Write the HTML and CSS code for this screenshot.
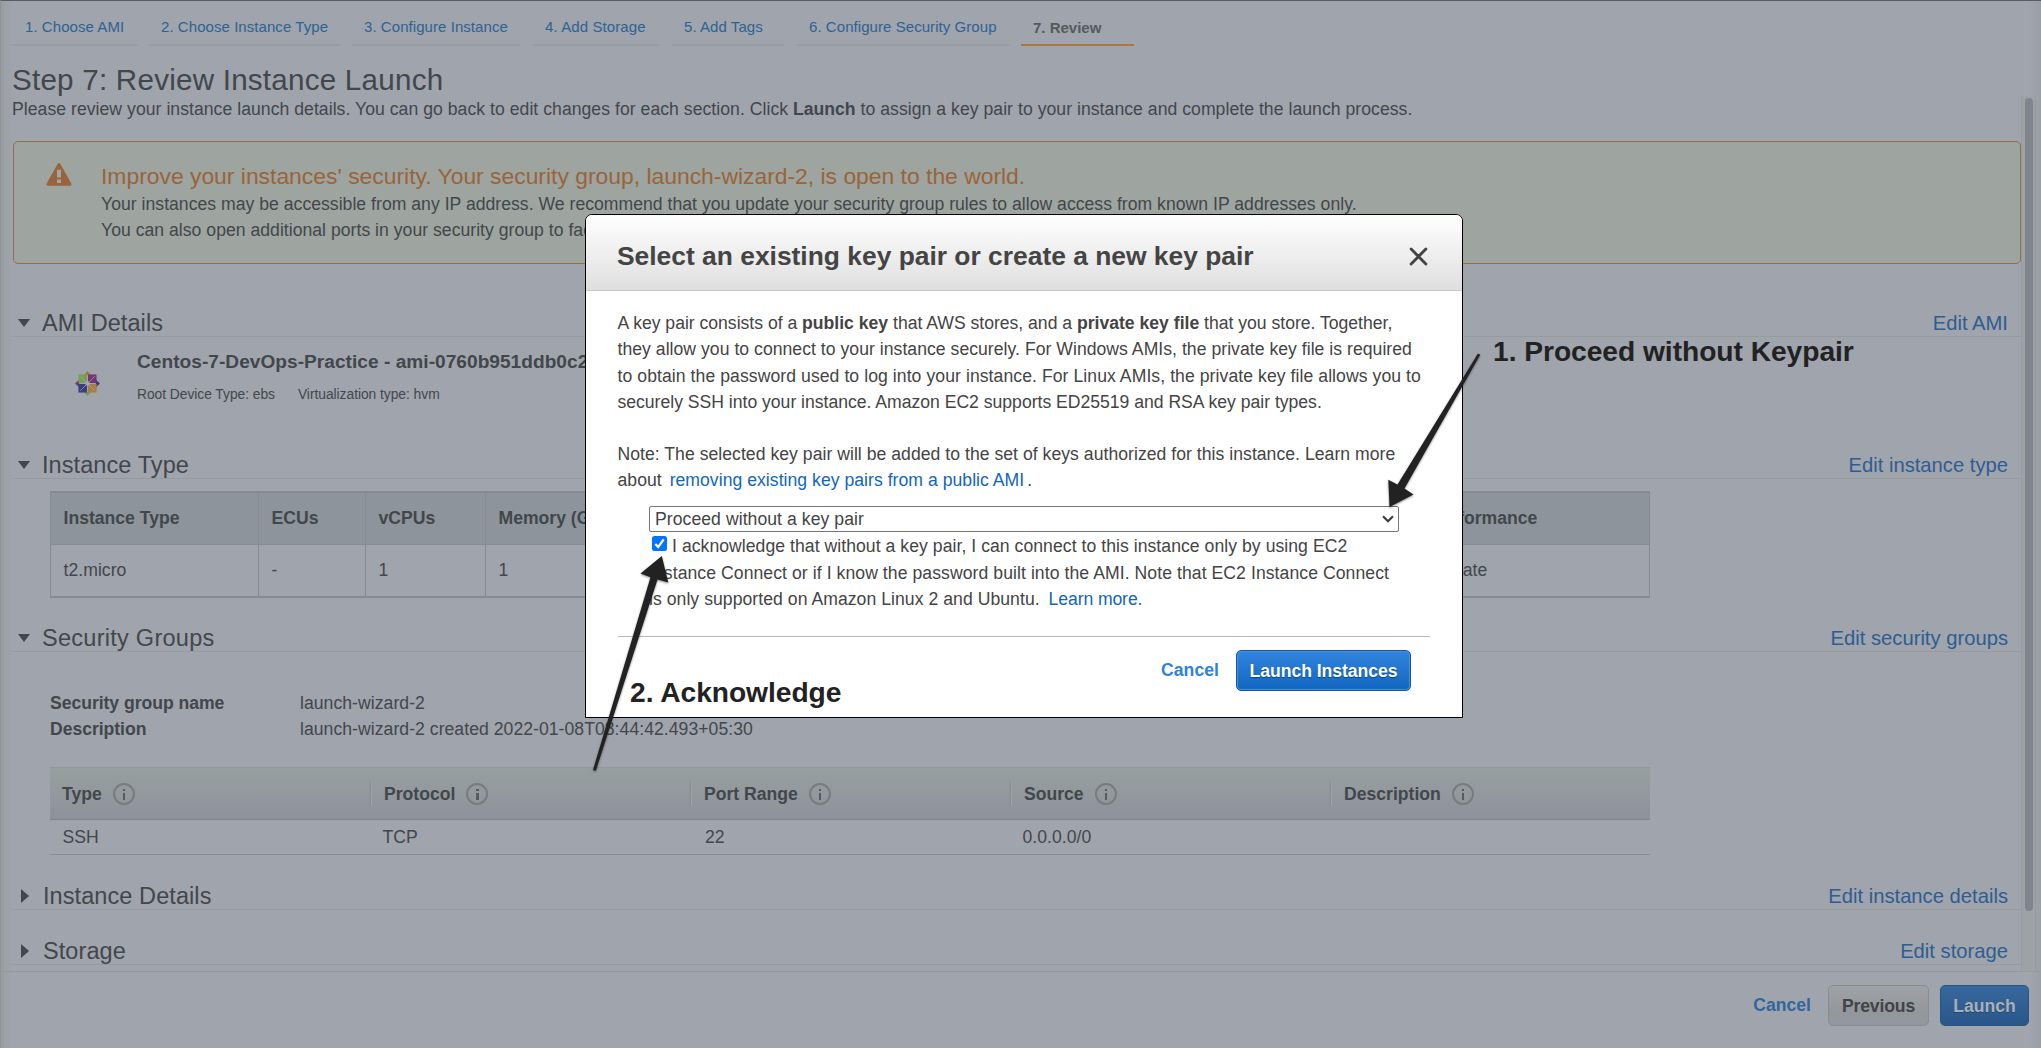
FILE: index.html
```
<!DOCTYPE html>
<html lang="en">
<head>
<meta charset="utf-8">
<title>Review Instance Launch</title>
<link rel="stylesheet" href="styles.css">
</head>
<body>
<div class="page">
  <nav class="tabs">
    <a class="tab tab-ami">1. Choose AMI</a>
    <a class="tab tab-type">2. Choose Instance Type</a>
    <a class="tab tab-configure">3. Configure Instance</a>
    <a class="tab tab-storage">4. Add Storage</a>
    <a class="tab tab-tags">5. Add Tags</a>
    <a class="tab tab-security">6. Configure Security Group</a>
    <a class="tab tab-review current">7. Review</a>
  </nav>
  <h1>Step 7: Review Instance Launch</h1>
  <div class="scroller">
    <main class="content">
      <p class="intro">Please review your instance launch details. You can go back to edit changes for each section. Click <b>Launch</b> to assign a key pair to your instance and complete the launch process.</p>
      <div class="alert">
        <svg class="alert-icon" viewBox="0 0 26 23"><path d="M11.6 1 Q13 -0.9 14.4 1 L25.3 20.6 Q26 22.7 24 22.8 H2 Q0 22.7 .7 20.6Z" fill="#97643b"/><path d="M11 6.7h4v7.8h-4zM11 16.6h4v3.4h-4z" fill="#a0a6a2"/></svg>
        <div>
          <h2>Improve your instances' security. Your security group, launch-wizard-2, is open to the world.</h2>
          <p>Your instances may be accessible from any IP address. We recommend that you update your security group rules to allow access from known IP addresses only.</p>
          <p>You can also open additional ports in your security group to facilitate</p>
        </div>
      </div>

      <section class="section section-ami">
        <header class="section-head"><i class="caret down"></i><h3>AMI Details</h3><a>Edit AMI</a></header>
        <div class="ami">
          <svg class="centos" viewBox="0 0 24 24">
            <path d="M12 0l3.500 4h-7z" fill="#a8773f"/><path d="M24 12l-4 3.500v-7z" fill="#3b3a78"/><path d="M12 24l-3.500-4h7z" fill="#739a4b"/><path d="M0 12l4-3.500v7z" fill="#703a75"/>
            <path d="M3.300 3.300h8.200v8.200H3.300z" fill="#78a052"/><path d="M12.500 3.300h8.200v8.200h-8.200z" fill="#733775"/><path d="M3.300 12.500h8.200v8.200H3.300z" fill="#39407e"/><path d="M12.500 12.500h8.200v8.200h-8.200z" fill="#a87e46"/>
            <path d="M5 5l14 14M19 5L5 19" stroke="#a0a2ac" stroke-width=".7"/><circle cx="12" cy="12" r="2.200" fill="#a6a8b0"/>
          </svg>
          <div>
            <div class="ami-name">Centos-7-DevOps-Practice - ami-0760b951ddb0c2</div>
            <div class="ami-meta"><span>Root Device Type: ebs</span><span>Virtualization type: hvm</span></div>
          </div>
        </div>
      </section>

      <section class="section section-type">
        <header class="section-head"><i class="caret down"></i><h3>Instance Type</h3><a>Edit instance type</a></header>
        <div class="type-table">
          <div class="type-row type-head"><span>Instance Type</span><span>ECUs</span><span>vCPUs</span><span>Memory (GiB)</span><span></span><span></span><span>Network Performance</span></div>
          <div class="type-row"><span>t2.micro</span><span>-</span><span>1</span><span>1</span><span></span><span></span><span>Low to Moderate</span></div>
        </div>
      </section>

      <section class="section section-groups">
        <header class="section-head"><i class="caret down"></i><h3 class="wide">Security Groups</h3><a>Edit security groups</a></header>
        <dl class="group-info"><dt>Security group name</dt><dd>launch-wizard-2</dd><dt>Description</dt><dd>launch-wizard-2 created 2022-01-08T08:44:42.493+05:30</dd></dl>
        <div class="rules">
          <div class="rules-row rules-head"><span>Type<i class="info"></i></span><span>Protocol<i class="info"></i></span><span>Port Range<i class="info"></i></span><span>Source<i class="info"></i></span><span>Description<i class="info"></i></span></div>
          <div class="rules-row rules-body"><span>SSH</span><span>TCP</span><span class="port">22</span><span>0.0.0.0/0</span><span></span></div>
        </div>
      </section>

      <section class="section section-details">
        <header class="section-head"><i class="caret right"></i><h3>Instance Details</h3><a>Edit instance details</a></header>
      </section>
      <section class="section">
        <header class="section-head"><i class="caret right"></i><h3>Storage</h3><a>Edit storage</a></header>
      </section>
    </main>
    <div class="track"><div class="thumb"></div></div>
  </div>
  <footer class="actions">
    <a class="cancel">Cancel</a>
    <button class="btn previous">Previous</button>
    <button class="btn launch">Launch</button>
  </footer>
</div>

<div class="modal">
  <header class="modal-head">
    <h2>Select an existing key pair or create a new key pair</h2>
    <svg class="close" viewBox="0 0 18 18"><path d="M2 2l14 14M16 2L2 16" stroke="#444" stroke-width="2.700" stroke-linecap="round"/></svg>
  </header>
  <div class="modal-body">
    <p><span class="snug">A key pair consists of a <b>public key</b> that AWS stores, and a <b>private key file</b> that you store. Together,</span><br>they allow you to connect to your instance securely. For Windows AMIs, the private key file is required<br><span class="loose">to obtain the password used to log into your instance. For Linux AMIs, the private key file allows you to</span><br><span class="snug">securely SSH into your instance. Amazon EC2 supports ED25519 and RSA key pair types.</span></p>
    <p class="note">Note: The selected key pair will be added to the set of keys authorized for this instance. Learn more<br>about <a class="inline-link">removing existing key pairs from a public AMI</a>.</p>
    <div class="select">Proceed without a key pair<svg viewBox="0 0 12 8"><path d="M1 1.300l5 5 5-5" fill="none" stroke="#3c3c3c" stroke-width="2.200"/></svg></div>
    <div class="ack"><span class="checkbox"><svg viewBox="0 0 15 15"><path d="M3.300 7.900l2.900 3.100 5.500-7.600" fill="none" stroke="#fff" stroke-width="2.200"/></svg></span>I acknowledge that without a key pair, I can connect to this instance only by using EC2<br><span class="loose">Instance Connect or if I know the password built into the AMI. Note that EC2 Instance Connect</span><br>is only supported on Amazon Linux 2 and Ubuntu. <a class="learn">Learn more.</a></div>
  </div>
  <footer class="modal-foot">
    <a class="modal-cancel">Cancel</a>
    <button class="btn launch-instances">Launch Instances</button>
  </footer>
</div>

<svg class="arrows" viewBox="0 0 2041 1048">
  <path d="M1478 353.500l2.200 1.200L1404.500 488.500 1413.500 494.500 1389.500 507 1388.300 479.700 1397.500 484.500Z"/>
  <path d="M593 770l2.800 .8L657.500 579.500 668.300 582.500 661.800 556 640.500 573.500 650.500 577.200Z"/>
</svg>
<div class="callout callout-keypair">1. Proceed without Keypair</div>
<div class="callout callout-ack">2. Acknowledge</div>
</body>
</html>
```
FILE: styles.css
```
* { box-sizing: border-box; margin: 0; padding: 0; }
body {
  width: 2041px; height: 1048px; overflow: hidden; position: relative;
  font: 17.6px/26.3px "Liberation Sans", Arial, sans-serif;
  letter-spacing: .045px; color: #42474c; background: #a0a4ac;
}
b { letter-spacing: 0; }
.page {
  height: 1048px; display: flex; flex-direction: column;
  border-top: 1px solid #565d6a; border-left: 1px solid #8e9398;
  background: linear-gradient(90deg, #999da3, #a0a4ac 12px, #a0a4ac 2028px, #9a9fa6);
}

/* Wizard steps */
.tabs { display: flex; height: 45px; padding-left: 12px; }
.tab {
  height: 45px; padding: 15px 0 0 12px; border-bottom: 2px solid #969c9f;
  font-size: 15px; line-height: 22px; letter-spacing: .06px; color: #2f6292; white-space: nowrap;
}
.tab-ami { width: 124px; margin-right: 12px; }
.tab-type { width: 191px; margin-right: 12px; }
.tab-configure { width: 168px; margin-right: 13px; }
.tab-storage { width: 126px; margin-right: 13px; letter-spacing: .1px; }
.tab-tags { width: 112px; margin-right: 13px; }
.tab-security { width: 212px; margin-right: 12px; }
.tab-review { width: 113px; }
.tab.current { padding-top: 16px; border-color: #a8783f; color: #555a60; font-weight: bold; letter-spacing: 0; }

h1 { height: 32px; margin: 18px 0 0 11px; font-size: 29.6px; line-height: 32px; font-weight: normal; letter-spacing: .23px; }

/* Scrolling review area */
.scroller { display: flex; height: 876px; border-bottom: 1px solid #959b9d; }
.content { width: 2020px; padding-left: 12px; }
.intro { height: 45px; margin-left: -1px; }
.track { width: 15px; height: 875px; padding: 2px 5px 0 3px; border: solid #969b9f; border-width: 0 1px; background: #9ca2a5; }
.thumb { width: 8px; height: 813px; border-radius: 4px; background: #80848c; }

.alert {
  display: flex; height: 123px; padding: 19px 0 0 32px; border: 1px solid #976b45; border-radius: 5px; background: #9ea49f;
}
.alert-icon { width: 26px; height: 23px; margin: 2px 29px 0 0; }
.alert h2 { font-size: 22.9px; line-height: 30px; font-weight: normal; letter-spacing: -.01px; color: #99643a; }
.alert p { white-space: nowrap; letter-spacing: .025px; }

.section-ami { height: 142px; margin-top: 46px; }
.section-type { height: 173px; }
.section-groups { height: 258px; }
.section-details { height: 55px; }
.section-head { display: flex; align-items: center; height: 27px; border-bottom: 1px solid #969b9e; line-height: 26px; }
.section-head h3 { flex: 1; font-size: 23.5px; font-weight: normal; letter-spacing: .08px; }
.section-head h3.wide { letter-spacing: .27px; }
.section-head a { margin-right: 13px; font-size: 20.200px; letter-spacing: .01px; color: #2f5d92; }
.caret { width: 0; height: 0; }
.caret.down { margin: 0 12px 1px 5px; border: solid transparent; border-width: 8px 6.500px 0; border-top-color: #42474c; }
.caret.right { margin: 0 14px 0 8px; border: solid transparent; border-width: 7.500px 0 7.500px 8px; border-left-color: #42474c; }

.ami { display: flex; padding: 12px 0 0 62px; }
.centos { width: 25px; height: 25px; margin: 22px 37px 0 0; }
.ami-name { font-size: 19.1px; line-height: 26px; font-weight: bold; letter-spacing: .03px; }
.ami-meta { display: flex; gap: 23px; margin-top: 10px; font-size: 13.8px; line-height: 20px; letter-spacing: -.03px; }

.type-table { width: 1600px; height: 107px; margin: 12px 0 0 37px; border: solid #868b93; border-width: 2px 1px; }
.type-row { display: grid; grid-template-columns: 208px 107px 120px 215px 321px 321px 1fr; height: 52px; }
.type-row span { padding: 12px 0 0 12.500px; border-right: 1px solid #868b93; white-space: nowrap; }
.type-row span:last-child { border-right: 0; }
.type-head { height: 51.500px; border-bottom: 1px solid #868b93; background: #8d949b; font-weight: bold; letter-spacing: 0; }

.group-info { display: grid; grid-template-columns: 250px 1fr; margin: 37.500px 0 0 37px; }
.group-info dt { font-weight: bold; letter-spacing: -.04px; }
.rules { width: 1600px; margin: 25.400px 0 0 37px; }
.rules-row { display: grid; grid-template-columns: repeat(5, 320px); }
.rules-head {
  height: 53px; align-items: center; border-top: 1px solid #92989a; border-bottom: 1px solid #81868c;
  background: linear-gradient(#979f9f, #8e929b); font-weight: bold; letter-spacing: 0;
}
.rules-head span { display: flex; align-items: center; height: 24px; padding-left: 12px; }
.rules-head span + span { padding-left: 13px; border-left: 1px solid #858b8f; box-shadow: inset 1px 0 #a0a5a8; }
.rules-body { height: 35px; border-bottom: 1px solid #888d93; line-height: 34px; }
.rules-body span { padding-left: 12.500px; }
.rules-body .port { padding-left: 15px; }
.info { position: relative; width: 22px; height: 22px; margin-left: 11px; border: 2px solid #777c80; border-radius: 50%; }
.info::before { content: ""; position: absolute; left: 8px; top: 4px; width: 2.500px; height: 2.500px; background: #555b5f; }
.info::after { content: ""; position: absolute; left: 8px; top: 8px; width: 2.500px; height: 7px; background: #555b5f; }

/* Buttons */
.actions { display: flex; justify-content: flex-end; align-items: center; height: 67px; padding-right: 12px; }
.btn { height: 41px; border: 1px solid #888d90; border-radius: 5px; font: bold 17.600px/26px "Liberation Sans", Arial, sans-serif; }
.cancel { margin-right: 17px; color: #33669c; font-weight: bold; letter-spacing: 0; }
.previous { width: 101px; margin-right: 11px; color: #404448; background: linear-gradient(#9fa3a7, #94989c 60%, #92969f); letter-spacing: -.150px; }
.launch { width: 89px; border-color: #2b5580; color: #a8b0ba; background: linear-gradient(#37689d, #2a568a); text-shadow: 0 1px #28456a; }

/* Key pair dialog */
.modal {
  position: absolute; left: 585px; top: 214px; width: 878px; height: 504px;
  border: 1px solid #000; border-radius: 7px 7px 0 0; background: #fff; color: #444;
}
.modal-head {
  display: flex; justify-content: space-between; height: 76px; padding: 23.500px 34px 0 31px;
  border-bottom: 1px solid #c8c8c8; border-radius: 6px 6px 0 0; background: linear-gradient(#fff, #dfdfdf);
}
.modal-head h2 { font-size: 26.400px; line-height: 34px; letter-spacing: 0; }
.close { width: 19px; height: 19px; margin-top: 8px; }
.modal-body { padding: 19px 31px 0 31.500px; white-space: nowrap; }
.modal-body p { letter-spacing: .035px; }
.modal-body .note { margin-top: 26px; }
.modal-body .snug { letter-spacing: -.010px; }
.modal-body .loose { letter-spacing: .070px; }
.inline-link { margin: 0 3px 0 3px; color: #1166bb; }
.select {
  display: flex; justify-content: space-between; align-items: center; width: 750px; height: 26px; margin: 12.500px 0 0 31.500px;
  padding: 0 4px 0 5px; border: 1px solid #767676; border-radius: 2px; color: #444; letter-spacing: .060px;
}
.select svg { width: 12px; height: 8px; }
.ack { margin: 1px 0 0 31.500px; letter-spacing: .050px; }
.checkbox { display: inline-block; width: 15px; height: 15px; margin: 0 5px 0 3px; border-radius: 2.500px; background: #0075ff; vertical-align: 1px; line-height: 0; }
.checkbox svg { width: 15px; height: 15px; }
.learn { margin-left: 4px; color: #1166bb; letter-spacing: -.100px; }
.modal-foot { display: flex; justify-content: flex-end; height: 80px; margin: 24px 32px 0; padding: 13px 19px 0 0; border-top: 1px solid #b9b9b9; }
.modal-cancel { margin: 7px 17px 0 0; color: #2e82dc; font-weight: bold; }
.launch-instances {
  width: 175px; border-color: #1159a8; color: #fff; background: linear-gradient(#3285dd, #1166bf);
  box-shadow: inset 0 0 1px 1px #4a90dc; text-shadow: 0 1px 1px #0a4488; letter-spacing: -.050px;
}

/* Annotations laid over the screen */
.arrows { position: absolute; left: 0; top: 0; width: 2041px; height: 1048px; fill: #222; filter: drop-shadow(0 1px 1px rgba(0, 0, 0, .45)); }
.callout { position: absolute; font-size: 28.200px; line-height: 34px; font-weight: bold; letter-spacing: -.040px; color: #222; white-space: nowrap; }
.callout-keypair { left: 1493px; top: 334px; }
.callout-ack { left: 630px; top: 675px; }
```
